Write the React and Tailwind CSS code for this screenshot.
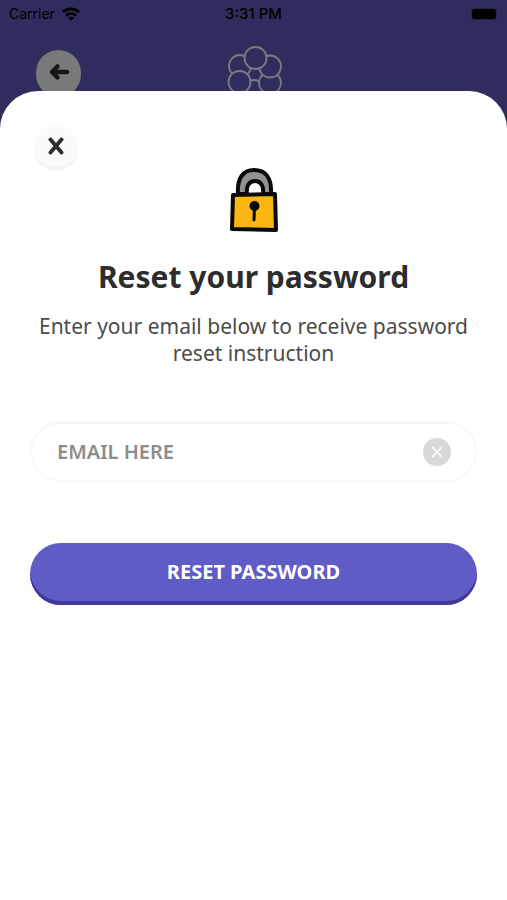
import React, { useState } from 'react';

const WifiIcon = () => (
  <svg viewBox="0 0 18 14" className="w-[18px] h-[14px]" fill="none" stroke="#000" strokeWidth="2.8">
    <path d="M1 5C5.6 .7 12.4 .7 17 5" />
    <path d="M4 8.6c2.9-2.6 7.1-2.6 10 0" />
    <path d="M9 13.8 6 10.9c1.5-1.4 4.5-1.4 6 0Z" fill="#000" stroke="none" />
  </svg>
);

// petals overlap in drawing order, lower ones first
const FlowerLogo = () => (
  <svg viewBox="0 0 56 56" className="w-14 h-14" fill="#2f2c5e" stroke="#7b7a80" strokeWidth="1.8">
    <circle cx="28" cy="45" r="11" />
    <circle cx="44" cy="37" r="11" />
    <circle cx="44" cy="20.5" r="11" />
    <circle cx="14" cy="20" r="11" />
    <circle cx="13.5" cy="36" r="11" />
    <circle cx="29.5" cy="12" r="11" />
  </svg>
);

const PadlockIcon = () => (
  <svg viewBox="0 0 50 68" className="w-[50px] h-[68px]" strokeLinejoin="round" strokeLinecap="round">
    <path
      d="M9 27C8 11 14 3 25 3s18 7 17 24h-8c1-8-2-13-8-13s-9 5-8 13Z"
      fill="#929292"
      stroke="#0a0a0a"
      strokeWidth="4"
    />
    <path d="M4 28 46 27 47 63 3 62Z" fill="#fbb612" stroke="#0a0a0a" strokeWidth="4" />
    <circle cx="25.5" cy="39" r="5" fill="#0a0a0a" />
    <path d="M25.5 40 25 53" stroke="#0a0a0a" strokeWidth="3" />
  </svg>
);

const StatusBar = () => (
  <div className="grid grid-cols-3 items-center h-7 px-[9px] font-['Inter','Liberation_Sans',sans-serif] text-sm text-black">
    <div className="flex items-center gap-[7px]">
      <span>Carrier</span>
      <WifiIcon />
    </div>
    <span className="text-center text-[15px] font-medium">3:31 PM</span>
    <div className="flex justify-end pr-0.5">
      <div className="w-6 h-[10px] rounded-[3px] bg-black ring-1 ring-[#232148]" />
    </div>
  </div>
);

const App = () => {
  const [email, setEmail] = useState('');

  return (
    <div className="min-h-screen flex flex-col bg-[#2f2c5e] font-['Noto_Sans',sans-serif]">
      <StatusBar />

      <header className="grid grid-cols-3 items-start h-[63px] px-9 overflow-hidden">
        <button
          aria-label="Back"
          className="w-[45px] h-[47px] mt-[22px] rounded-full bg-[#797979] flex items-center justify-center"
        >
          <svg viewBox="0 0 22 18" className="w-[22px] h-[18px] -mt-1" fill="none" stroke="#171717" strokeWidth="4.5" strokeLinecap="round" strokeLinejoin="round">
            <path d="M9.5 3.5 4 9l5.5 5.5M5 9h14" />
          </svg>
        </button>
        <div className="flex justify-center mt-[18px]">
          <FlowerLogo />
        </div>
      </header>

      <main className="flex-1 flex flex-col rounded-t-[38px] bg-white px-[30px] pt-[34px]">
        <button
          aria-label="Close"
          className="w-11 h-[46px] ml-1 rounded-full bg-[#fafafa] border-b-4 border-[#f3f3f3] flex items-center justify-center"
        >
          <svg viewBox="0 0 18 20" className="w-[18px] h-5" stroke="#2d2d2d" strokeWidth="4" strokeLinecap="round">
            <path d="m3.5 3.5 11 13M14.5 3.5l-11 13" />
          </svg>
        </button>

        <div className="flex flex-col items-center -mt-1 text-center">
          <PadlockIcon />
          <h1 className="mt-[22px] text-[30px] leading-10 font-bold text-[#2d2d2d]">Reset your password</h1>
          <p className="mt-4 text-[21px] leading-[27px] text-[#4b4b4b]">
            Enter your email below to receive password reset instruction
          </p>
        </div>

        <form className="mt-[54px]" onSubmit={(e) => e.preventDefault()}>
          <div className="flex items-center h-[61px] rounded-full border-2 border-t-3 border-[#f8f8f8] pl-[25px] pr-6">
            <input
              type="email"
              aria-label="Email"
              placeholder="EMAIL HERE"
              value={email}
              onChange={(e) => setEmail(e.target.value)}
              className="flex-1 min-w-0 bg-transparent text-xl font-semibold text-[#2d2d2d] placeholder:text-[#8c8c8c] outline-none"
            />
            <button
              type="button"
              aria-label="Clear email"
              onClick={() => setEmail('')}
              className="w-7 h-7 rounded-full bg-[#d8d8d8] flex items-center justify-center"
            >
              <svg viewBox="0 0 12 12" className="w-3 h-3" stroke="#fff" strokeWidth="1.6" strokeLinecap="round">
                <path d="m1.5 1.5 9 9M10.5 1.5l-9 9" />
              </svg>
            </button>
          </div>

          <button
            type="submit"
            className="w-full h-[62px] mt-[61px] rounded-[31px] bg-[#605cc5] shadow-[inset_0_-4px_0_#413898] pb-[5px] text-xl font-bold text-white"
          >
            RESET PASSWORD
          </button>
        </form>
      </main>
    </div>
  );
};

export default App;
